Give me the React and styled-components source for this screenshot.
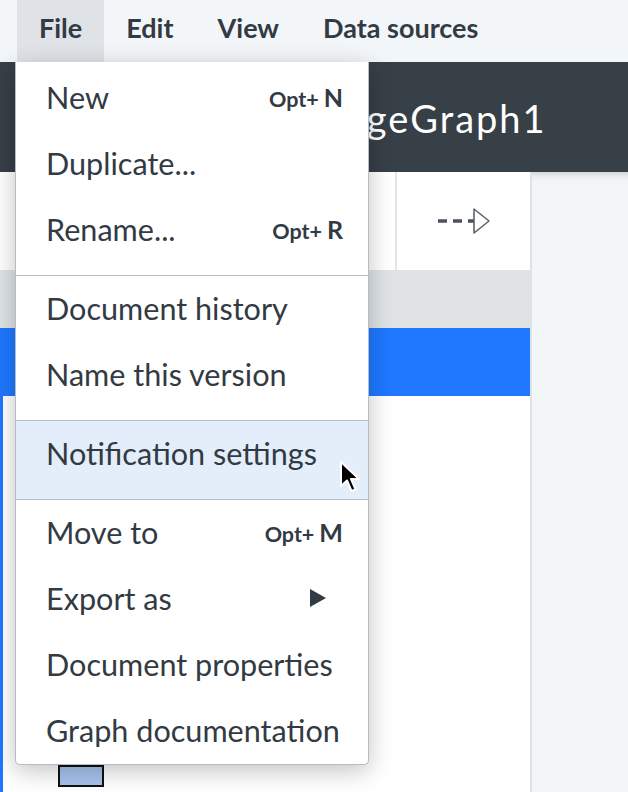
import React from "react";
import styled, { createGlobalStyle } from "styled-components";

const GlobalStyle = createGlobalStyle`
  html, body { margin: 0; padding: 0; background: #ffffff; }
  body { font-family: Lato, "Open Sans", sans-serif; }
  * { box-sizing: border-box; }
`;

const Page = styled.div`
  position: relative;
  width: 628px;
  height: 792px;
  overflow: hidden;
  background: #ffffff;
  color: #323a43;
`;

const MenuBar = styled.div`
  display: flex;
  height: 62px;
  padding-left: 17px;
  background: #f3f6f9;
`;

const MenuBarItem = styled.div`
  display: flex;
  align-items: center;
  padding: 0 22px 8px;
  font-size: 27px;
  font-weight: 700;
  color: #323a43;
  background: ${(p) => (p.$active ? "#dfe3e7" : "transparent")};
`;

const Header = styled.div`
  display: flex;
  align-items: center;
  height: 110px;
  padding-left: 205px;
  background: #373f47;
`;

const Title = styled.div`
  font-size: 38px;
  letter-spacing: 2px;
  color: #ffffff;
  padding-top: 2px;
`;

const Workspace = styled.div`
  display: flex;
  height: 620px;
`;

const Main = styled.div`
  display: flex;
  flex-direction: column;
  width: 530px;
`;

const Toolbar = styled.div`
  display: flex;
  height: 98px;
  background: #ffffff;
`;

const ToolCell = styled.div`
  display: flex;
  align-items: center;
  justify-content: center;
  width: ${(p) => (p.$w ? `${p.$w}px` : "auto")};
  flex: ${(p) => (p.$w ? "none" : "1")};
  border-left: ${(p) => (p.$divided ? "2px solid #e3e6e9" : "none")};
`;

const Band = styled.div`
  height: ${(p) => p.$h}px;
  background: ${(p) => p.$bg};
`;

const Canvas = styled.div`
  position: relative;
  flex: 1;
  border-left: 3px solid #1f78ff;
  background: #ffffff;
`;

const Node = styled.div`
  position: absolute;
  left: 55px;
  top: 369px;
  width: 46px;
  height: 22px;
  background: #a6c3ef;
  border: 2px solid #111111;
`;

const SidePanel = styled.div`
  width: 98px;
  background: #f3f6f9;
  border-left: 2px solid #dfe3e7;
  box-shadow: inset 0 10px 10px -10px rgba(0, 0, 0, 0.25);
`;

const Dropdown = styled.div`
  position: absolute;
  top: 62px;
  left: 15px;
  width: 354px;
  padding-top: 3px;
  background: #ffffff;
  border: 1px solid #b3bdc8;
  border-top: none;
  border-radius: 0 0 5px 5px;
  box-shadow: 0 6px 24px rgba(0, 0, 0, 0.24);
  display: flex;
  flex-direction: column;
`;

const Section = styled.div`
  padding-bottom: 12px;
  background: ${(p) => (p.$active ? "#e4eefb" : "transparent")};
  border-bottom: 1px solid #b3bdc8;
  &:last-child {
    padding-bottom: 0;
    border-bottom: none;
  }
`;

const Item = styled.div`
  display: flex;
  align-items: center;
  justify-content: space-between;
  height: 66px;
  padding: 0 25px 2px 30px;
  font-size: 30.6px;
  color: #323a43;
  white-space: nowrap;
`;

const Shortcut = styled.span`
  display: flex;
  align-items: baseline;
  gap: 5px;
  font-weight: 700;
  color: #323a43;
`;

const Mod = styled.span`
  font-size: 21.5px;
`;

const Key = styled.span`
  font-size: 25px;
`;

const SubArrow = styled.svg`
  margin-right: 16px;
`;

const Cursor = styled.svg`
  position: absolute;
  left: 339px;
  top: 460px;
`;

function DashedArrow() {
  return (
    <svg width="54" height="28" viewBox="0 0 54 28">
      <line x1="1" y1="14" x2="37" y2="14" stroke="#4a525b" strokeWidth="3.5" strokeDasharray="9 6" />
      <polygon points="37,2 52,14 37,26" fill="#ffffff" stroke="#5a626b" strokeWidth="1.6" strokeLinejoin="round" />
    </svg>
  );
}

const menu = [
  [
    { label: "New", key: "N" },
    { label: "Duplicate..." },
    { label: "Rename...", key: "R" },
  ],
  [{ label: "Document history" }, { label: "Name this version" }],
  [{ label: "Notification settings" }],
  [
    { label: "Move to", key: "M" },
    { label: "Export as", sub: true },
    { label: "Document properties" },
    { label: "Graph documentation" },
  ],
];

export default function App() {
  return (
    <>
      <GlobalStyle />
      <Page>
        <MenuBar>
          <MenuBarItem $active>File</MenuBarItem>
          <MenuBarItem>Edit</MenuBarItem>
          <MenuBarItem>View</MenuBarItem>
          <MenuBarItem>Data sources</MenuBarItem>
        </MenuBar>
        <Header>
          <Title>KnowledgeGraph1</Title>
        </Header>
        <Workspace>
          <Main>
            <Toolbar>
              <ToolCell />
              <ToolCell $w={135} $divided>
                <DashedArrow />
              </ToolCell>
            </Toolbar>
            <Band $h={58} $bg="#dfe3e6" />
            <Band $h={68} $bg="#1f78ff" />
            <Canvas>
              <Node />
            </Canvas>
          </Main>
          <SidePanel />
        </Workspace>
        <Dropdown>
          {menu.map((section, i) => (
            <Section key={i} $active={i === 2}>
              {section.map((it) => (
                <Item key={it.label}>
                  <span>{it.label}</span>
                  {it.key && (
                    <Shortcut>
                      <Mod>Opt+</Mod>
                      <Key>{it.key}</Key>
                    </Shortcut>
                  )}
                  {it.sub && (
                    <SubArrow width="18" height="20" viewBox="0 0 18 20">
                      <polygon points="1,1 17,10 1,19" fill="#323a43" />
                    </SubArrow>
                  )}
                </Item>
              ))}
            </Section>
          ))}
        </Dropdown>
        <Cursor width="26" height="34" viewBox="0 0 26 34">
          <path
            d="M2 2 L2 26 L8 20.5 L12.5 31 L16.5 29.3 L12 19 L20 19 Z"
            fill="#000000"
            stroke="#ffffff"
            strokeWidth="2"
            strokeLinejoin="round"
          />
        </Cursor>
      </Page>
    </>
  );
}
